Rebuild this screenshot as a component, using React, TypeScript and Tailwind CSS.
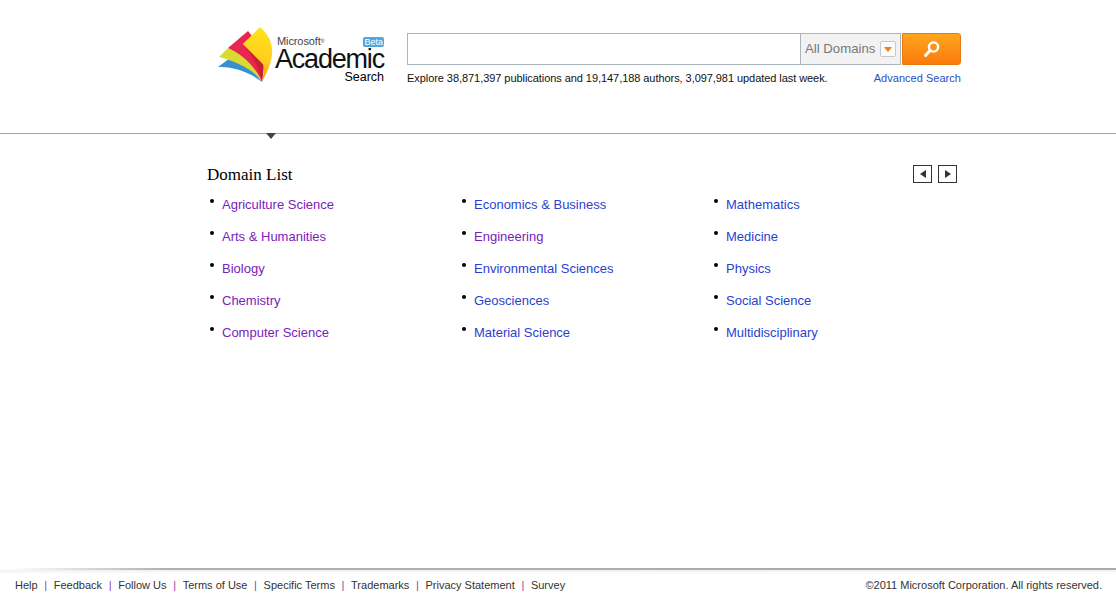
import React from 'react';

const columns = [
  [
    { label: 'Agriculture Science', visited: true },
    { label: 'Arts & Humanities', visited: true },
    { label: 'Biology', visited: true },
    { label: 'Chemistry', visited: true },
    { label: 'Computer Science', visited: true },
  ],
  [
    { label: 'Economics & Business', visited: false },
    { label: 'Engineering', visited: true },
    { label: 'Environmental Sciences', visited: false },
    { label: 'Geosciences', visited: false },
    { label: 'Material Science', visited: false },
  ],
  [
    { label: 'Mathematics', visited: false },
    { label: 'Medicine', visited: false },
    { label: 'Physics', visited: false },
    { label: 'Social Science', visited: false },
    { label: 'Multidisciplinary', visited: false },
  ],
];

const footerLinks = ['Help', 'Feedback', 'Follow Us', 'Terms of Use', 'Specific Terms', 'Trademarks', 'Privacy Statement', 'Survey'];

function LogoMark() {
  return (
    <svg width="56" height="58" viewBox="0 0 56 58" className="shrink-0">
      <defs>
        <linearGradient id="gold" x1="0" y1="0" x2="0" y2="1">
          <stop offset="0" stopColor="#ffe21a" />
          <stop offset="0.6" stopColor="#ffcf1c" />
          <stop offset="1" stopColor="#f99f1c" />
        </linearGradient>
      </defs>
      {/* page fan, back to front */}
      <path d="M0 41 L12 32 L30 36 L44 56 C32 46 14 40 0 41 Z" fill="#3a8fd0" />
      <path d="M1 31 L10 22 L30 30 L44 56 C36 44 20 36 1 31 Z" fill="#d9dc30" />
      <path d="M10 22 L30 5 L34 10 L25 18 L46 39 L44 56 C36 38 22 27 10 22 Z" fill="#e9264f" />
      <path d="M25 18 L46 39 L44 56 C42 44 36 32 25 18 Z" fill="#c9212f" />
      <path d="M25 18 L42 1 C50 8 55 17 54 28 C53 38 49 47 44 56 C46 46 46 42 45 38 Z" fill="url(#gold)" />
    </svg>
  );
}

export default function App() {
  return (
    <div className="flex h-[597px] flex-col overflow-hidden bg-white font-['Liberation_Sans',Arial,sans-serif]">
      {/* Header */}
      <header className="relative h-[134px] shrink-0 border-b border-[#a0a0a0]">
        <div className="flex pl-[218px] pt-[26px]">
          <LogoMark />
          <div className="relative ml-[1px] h-[60px] w-[110px] text-black">
            <div className="absolute left-[2px] top-[10px] text-[11px] leading-[11px] tracking-[-0.1px] text-[#444]">Microsoft<sup className="text-[5px]">®</sup></div>
            <div className="absolute left-0 top-[22px] whitespace-nowrap text-[27px] leading-[22px] tracking-[-1.2px] text-[#111]">Academic</div>
            <div className="absolute right-[1px] top-[45px] text-[12.5px] leading-[13px]">Search</div>
            <div className="absolute right-[1px] top-[11px] rounded-[2px] bg-[#4fa8dc] px-[1px] text-[9px] leading-[10px] text-white">Beta</div>
          </div>
          <div className="ml-[22px] w-[554px] pt-[7px]">
            <div className="flex h-[32px]">
              <div className="w-[393px] border border-r-0 border-[#aab6bb] bg-white" />
              <div className="flex w-[101px] items-center whitespace-nowrap border border-[#aab6bb] bg-[#f2f2f2] pl-[4px] text-[13.2px] text-[#777]">
                All Domains
                <span className="ml-[5px] flex h-[16px] w-[16px] items-center justify-center rounded-[2px] border border-[#c8c8c8] bg-[#fbfbfb]">
                  <span className="h-0 w-0 border-x-[4px] border-t-[5px] border-x-transparent border-t-[#f07f10]" />
                </span>
              </div>
              <button className="ml-[1px] flex w-[59px] items-center justify-center rounded-r-[3px] border border-[#e87b10] bg-gradient-to-b from-[#ffa51f] to-[#fb7a0a]">
                <svg width="18" height="18" viewBox="0 0 18 18" fill="none" stroke="#fff">
                  <circle cx="10.5" cy="7" r="4.6" strokeWidth="2.4" />
                  <path d="M7 10.5 L2.5 15.5" strokeWidth="3" strokeLinecap="round" />
                </svg>
              </button>
            </div>
            <div className="mt-[6px] flex items-baseline justify-between text-[11px] leading-[14px]">
              <span className="tracking-[-0.06px] text-[#111]">Explore 38,871,397 publications and 19,147,188 authors, 3,097,981 updated last week.</span>
              <a className="tracking-[0.03px] text-[#2a4fc8]">Advanced Search</a>
            </div>
          </div>
        </div>
        <span className="absolute left-[266px] top-[133px] h-0 w-0 border-x-[5px] border-t-[6px] border-x-transparent border-t-[#444]" />
      </header>

      {/* Domain list */}
      <main className="flex-1 pl-[207px] pt-[30px]">
        <div className="flex w-[750px] items-center justify-between">
          <h2 className="mt-[1px] font-['Liberation_Serif',serif] text-[17px] leading-5 text-black">Domain List</h2>
          <div className="-mt-[2px] flex gap-[6px]">
            <button className="flex h-[18px] w-[19px] items-center justify-center border border-[#333]">
              <span className="h-0 w-0 border-y-[4px] border-r-[6px] border-y-transparent border-r-[#333]" />
            </button>
            <button className="flex h-[18px] w-[19px] items-center justify-center border border-[#333]">
              <span className="h-0 w-0 border-y-[4px] border-l-[6px] border-y-transparent border-l-[#333]" />
            </button>
          </div>
        </div>
        <div className="mt-[4px] flex">
          {columns.map((col, i) => (
            <ul key={i} className="w-[252px]">
              {col.map((item) => (
                <li key={item.label} className="relative flex h-[32px] items-center pl-[15px] text-[13px]">
                  <span className="absolute left-[3px] top-[10px] h-[4px] w-[4px] rounded-full bg-black" />
                  <a className={item.visited ? 'text-[#7a22b8]' : 'text-[#2a3fd0]'}>{item.label}</a>
                </li>
              ))}
            </ul>
          ))}
        </div>
      </main>

      {/* Footer */}
      <div className="h-[2px] shrink-0 bg-gradient-to-r from-white from-[1%] via-[#b0b0b0] via-[15%] to-[#aaaaaa]" />
      <footer className="flex h-[27px] shrink-0 items-center justify-between bg-gradient-to-b from-[#f0f0f0] to-white to-[15%] pl-[15px] pr-[14px] pt-[3px] text-[11px] text-[#333]">
        <div className="flex items-center">
          {footerLinks.map((link, i) => (
            <React.Fragment key={link}>
              {i > 0 && <span className="mx-[6.65px] text-[#8a3fa8]">|</span>}
              <a>{link}</a>
            </React.Fragment>
          ))}
        </div>
        <span>©2011 Microsoft Corporation. All rights reserved.</span>
      </footer>
    </div>
  );
}
